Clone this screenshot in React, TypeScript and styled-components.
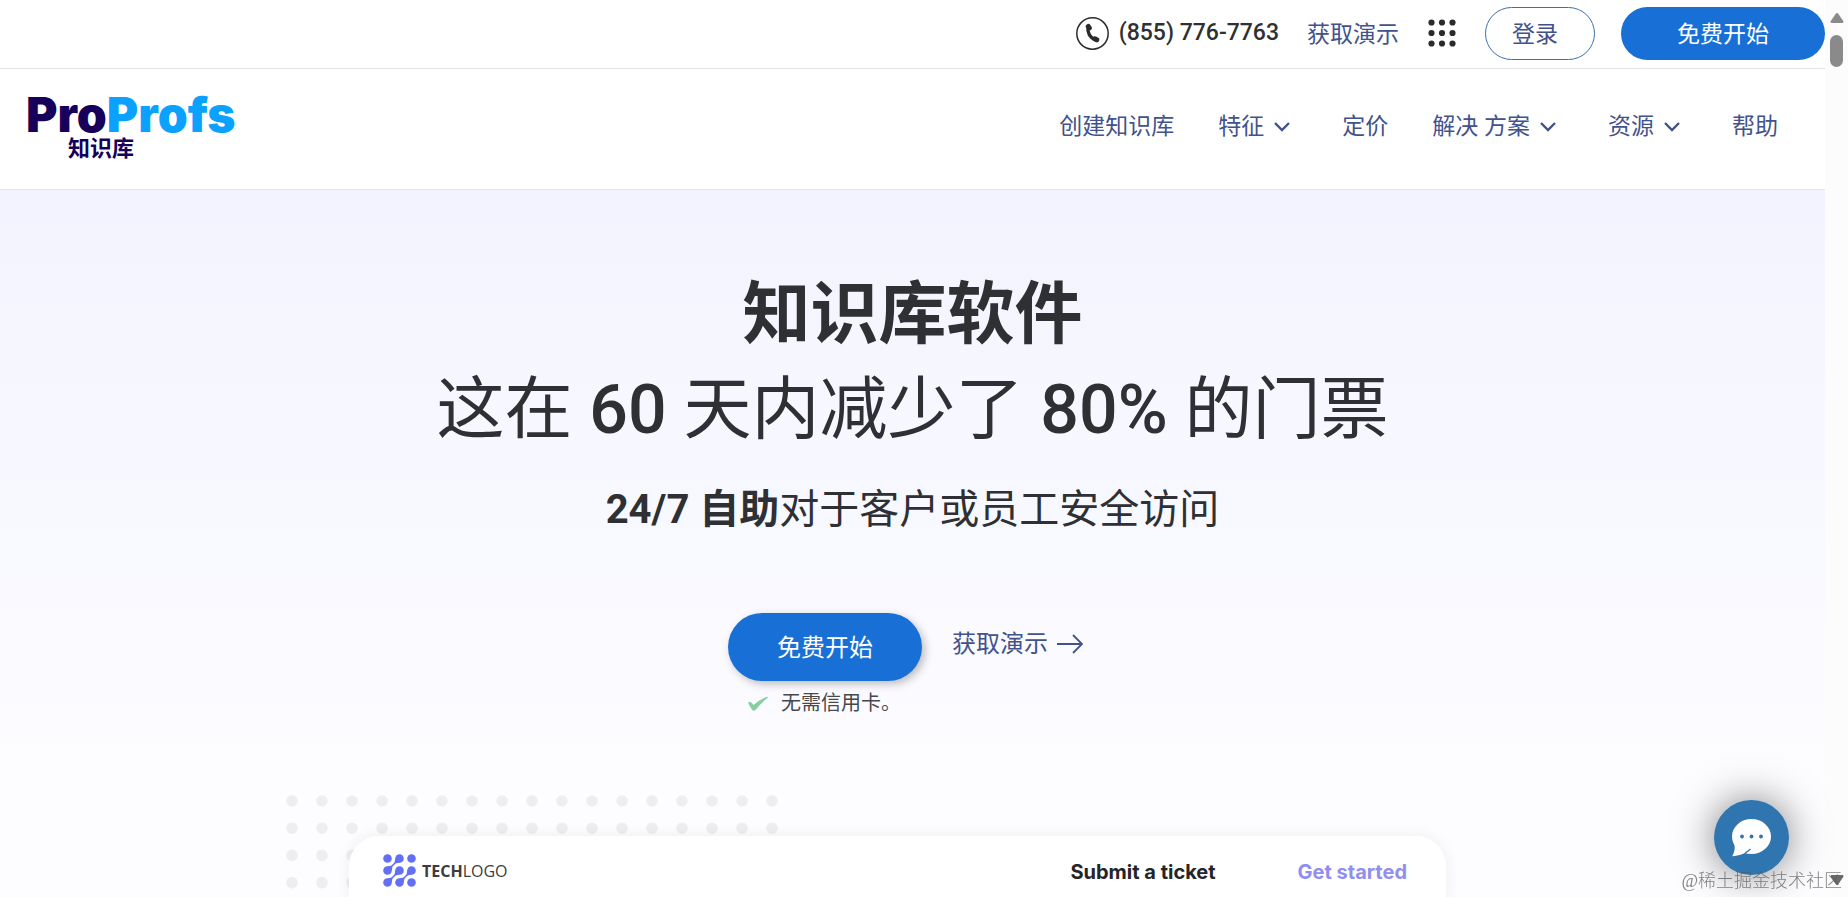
import React from 'react';
import styled, { createGlobalStyle } from 'styled-components';

const GlobalStyle = createGlobalStyle`
  *, *::before, *::after { box-sizing: border-box; }
  body {
    margin: 0;
    background: #fff;
    color: #2f3033;
    font-family: Roboto, "Noto Sans CJK SC", sans-serif;
  }
  a { color: inherit; text-decoration: none; }
  button { font-family: inherit; cursor: pointer; }
`;

const Shell = styled.div`
  display: flex;
  height: 100vh;
  overflow: hidden;
`;

const Page = styled.div`
  flex: 1;
  min-width: 0;
  display: flex;
  flex-direction: column;
`;

const TopBar = styled.div`
  display: flex;
  align-items: center;
  justify-content: flex-end;
  flex-shrink: 0;
  height: 69px;
  padding-bottom: 2px;
  border-bottom: 1px solid #e2e2e5;
`;

const PhoneLink = styled.a`
  display: flex;
  align-items: center;
  gap: 10px;
  margin-right: 28px;
  font-size: 23px;
  line-height: 32px;
  font-weight: 500;
`;

const TextLink = styled.a`
  color: #41528c;
  font-size: 23px;
  line-height: 32px;
`;

const TopLink = styled(TextLink)`
  padding-top: 4px;
`;

const AppsButton = styled.button`
  display: flex;
  margin: 0 29px;
  padding: 0;
  border: 0;
  background: none;
`;

const PillButton = styled.button<{ $kind: 'outline' | 'solid' | 'hero' }>`
  width: ${p => (p.$kind === 'outline' ? 110 : p.$kind === 'solid' ? 204 : 194)}px;
  height: ${p => (p.$kind === 'hero' ? 68 : 53)}px;
  padding: 0 ${p => (p.$kind === 'outline' ? 10 : 0)}px 3px 0;
  border: ${p => (p.$kind === 'outline' ? '1px solid #3a71ad' : '0')};
  border-radius: 34px;
  background: ${p => (p.$kind === 'outline' ? '#fff' : '#186fd6')};
  color: ${p => (p.$kind === 'outline' ? '#41528c' : '#fff')};
  box-shadow: ${p => (p.$kind === 'hero' ? '3px 3px 9px rgba(0, 0, 0, 0.25)' : 'none')};
  font-size: ${p => (p.$kind === 'hero' ? 24 : 23)}px;
`;

const TopActions = styled.div`
  display: flex;
  gap: 26px;
`;

const Header = styled.header`
  display: flex;
  align-items: center;
  justify-content: space-between;
  flex-shrink: 0;
  height: 121px;
  padding: 0 47px 0 26px;
  border-bottom: 1px solid #e4e4ee;
`;

const Logo = styled.a`
  display: flex;
  flex-direction: column;
  color: #16005a;
  padding-bottom: 4px;
`;

const LogoWord = styled.span`
  font-family: Inter, sans-serif;
  font-size: 48px;
  line-height: 44px;
  font-weight: 900;
`;

const LogoBlue = styled.span`
  color: #0ba1ff;
`;

const LogoSub = styled.span`
  padding-left: 42px;
  font-size: 22px;
  line-height: 24px;
  font-weight: 700;
`;

const Nav = styled.nav`
  display: flex;
  gap: 44px;
  padding-bottom: 4px;
`;

const NavItem = styled(TextLink)`
  display: flex;
  align-items: center;
  gap: 10px;

  svg { margin-right: 8px; }
`;

const Hero = styled.main`
  flex: 1;
  display: flex;
  flex-direction: column;
  align-items: center;
  padding-top: 78px;
  background: linear-gradient(#f2f3fe 0, #f6f7ff 220px, #fafaff 440px, #fdfdff 600px);
`;

const Title = styled.h1`
  margin: 0;
  text-align: center;
  font-size: 68px;
  line-height: 95px;
`;

const TitleLine = styled.span<{ $light?: boolean }>`
  display: block;
  font-weight: ${p => (p.$light ? 400 : 700)};
`;

const Digits = styled.span`
  font-weight: 500;
`;

const Subtitle = styled.p`
  margin: 22px 0 0;
  font-size: 40px;
  line-height: 60px;

  b { font-weight: 700; }
`;

const Actions = styled.div`
  display: flex;
  align-items: flex-start;
  gap: 30px;
  margin-top: 73px;
  padding-right: 14px;
`;

const StartColumn = styled.div`
  display: flex;
  flex-direction: column;
`;

const Note = styled.span`
  display: flex;
  align-items: center;
  gap: 12px;
  padding: 7px 0 0 20px;
  color: #47484b;
  font-size: 20px;
  line-height: 31px;
  white-space: nowrap;
  width: 194px;
`;

const DemoLink = styled(TextLink)`
  display: flex;
  align-items: center;
  gap: 8px;
  height: 62px;
  font-size: 24px;
`;

const Showcase = styled.section`
  position: relative;
  width: 69%;
  max-width: 1253px;
  flex: 1;
  display: flex;
  margin-top: 76px;
  padding: 41px 93px 0 63px;
`;

const DotField = styled.svg`
  position: absolute;
  left: 0;
  top: 0;
`;

const Card = styled.div`
  position: relative;
  flex: 1;
  display: flex;
  align-items: flex-start;
  padding: 18px 39px 0 34px;
  border-radius: 30px 30px 0 0;
  background: #fff;
  box-shadow: 0 0 12px 4px rgba(0, 0, 0, 0.04);
`;

const TechLogo = styled.span`
  display: flex;
  align-items: center;
  gap: 6px;
  margin-right: auto;
  color: #3c3c3e;
  font-family: "Open Sans", sans-serif;
  font-size: 16px;
  line-height: 32px;

  b { font-weight: 700; }
`;

const CardLink = styled.a<{ $accent?: boolean }>`
  margin-left: ${p => (p.$accent ? 82 : 0)}px;
  padding-top: 1px;
  color: ${p => (p.$accent ? '#918ef0' : '#252528')};
  font-family: Inter, sans-serif;
  font-size: 20px;
  line-height: 34px;
  font-weight: 700;
`;

const ScrollRail = styled.div`
  display: flex;
  flex-direction: column;
  align-items: center;
  flex-shrink: 0;
  width: 23px;
  padding: 13px 0 12px;
  background: #fcfcfd;
`;

const Thumb = styled.div`
  width: 13px;
  height: 32px;
  margin: 12px 0 auto;
  border-radius: 7px;
  background: #8a8a8a;
`;

const ChatButton = styled.button`
  position: fixed;
  right: 59px;
  bottom: 22px;
  width: 75px;
  height: 75px;
  display: flex;
  align-items: center;
  justify-content: center;
  padding: 0;
  border: 0;
  border-radius: 50%;
  background: #2f75b0;
  box-shadow: 0 0 40px rgba(0, 0, 0, 0.5);
`;

const Watermark = styled.span`
  position: fixed;
  right: 6px;
  bottom: 4px;
  color: rgba(90, 90, 90, 0.75);
  font-family: "Liberation Serif", "Noto Sans CJK SC", serif;
  font-size: 18px;
  line-height: 24px;
  font-weight: 300;
`;

const Chevron = () => (
  <svg width="16" height="10" viewBox="0 0 16 10" fill="none" stroke="#41528c" strokeWidth="2.4">
    <path d="M1 1l7 7 7-7" />
  </svg>
);

const PhoneIcon = () => (
  <svg width="33" height="33" viewBox="0 0 33 33">
    <circle cx="16.5" cy="16.5" r="15.7" fill="none" stroke="#2b2b2d" strokeWidth="1.5" />
    <g fill="none" stroke="#2b2b2d" strokeLinecap="round">
      <path d="M12 10c-.8 5.500 2 11 7.500 13" strokeWidth="3.4" />
      <path d="M12.300 9.500l1 1.400M18.800 21.800l2 1" strokeWidth="5" />
    </g>
  </svg>
);

const AppsIcon = () => (
  <svg width="28" height="28" viewBox="0 0 28 28" fill="#2b2b2d">
    {[3.5, 14, 24.5].map(y => [3.5, 14, 24.5].map(x => <circle key={`${x}-${y}`} cx={x} cy={y} r="3.100" />))}
  </svg>
);

const TECH_GRID = [4.5, 16.5, 28.5];
const TECH_LINKS = [[4.5, 16.5], [4.5, 28.5], [16.5, 28.5]];

const TechMark = () => (
  <svg width="33" height="33" viewBox="0 0 33 33" fill="#6470f3">
    {TECH_GRID.map(y => TECH_GRID.map(x => <circle key={`${x}-${y}`} cx={x} cy={y} r="4.3" />))}
    {TECH_LINKS.map(([x, y]) => (
      <g key={`${x}-${y}`}>
        <path d={`M${x} ${y - 4.3}L${x + 5} ${y - 5}L${x + 4.3} ${y}zM${x + 12} ${y - 7.7}L${x + 7} ${y - 7}L${x + 7.7} ${y - 12}z`} />
        <path d={`M${x + 3} ${y - 3}L${x + 9} ${y - 9}`} stroke="#6470f3" strokeWidth="1.6" />
      </g>
    ))}
  </svg>
);

const DOT_COLUMNS = Array.from({ length: 17 }, (_, i) => i);
const DOT_ROWS = [0, 1, 2, 3];

const navItems = [
  { label: '创建知识库' },
  { label: '特征', menu: true },
  { label: '定价' },
  { label: '解决 方案', menu: true },
  { label: '资源', menu: true },
  { label: '帮助' },
];

export default function App() {
  return (
    <>
      <GlobalStyle />
      <Shell>
        <Page>
          <TopBar>
            <PhoneLink href="tel:8557767763">
              <PhoneIcon />
              (855) 776-7763
            </PhoneLink>
            <TopLink href="#demo">获取演示</TopLink>
            <AppsButton type="button" aria-label="产品">
              <AppsIcon />
            </AppsButton>
            <TopActions>
              <PillButton type="button" $kind="outline">登录</PillButton>
              <PillButton type="button" $kind="solid">免费开始</PillButton>
            </TopActions>
          </TopBar>
          <Header>
            <Logo href="#home">
              <LogoWord>Pro<LogoBlue>Profs</LogoBlue></LogoWord>
              <LogoSub>知识库</LogoSub>
            </Logo>
            <Nav>
              {navItems.map(item => (
                <NavItem key={item.label} href="#nav">
                  {item.label}
                  {item.menu && <Chevron />}
                </NavItem>
              ))}
            </Nav>
          </Header>
          <Hero>
            <Title>
              <TitleLine>知识库软件</TitleLine>
              <TitleLine $light>
                这在 <Digits>60</Digits> 天内减少了 <Digits>80%</Digits> 的门票
              </TitleLine>
            </Title>
            <Subtitle><b>24/7 自助</b>对于客户或员工安全访问</Subtitle>
            <Actions>
              <StartColumn>
                <PillButton type="button" $kind="hero">免费开始</PillButton>
                <Note>
                  <svg width="21" height="16" viewBox="0 0 21 16" fill="#86cf9e">
                    <path d="M0 6.500c2-1.200 3.500-.6 5.500 2.500C10 5.500 14 2.500 19 .8c1-.2 1.200.6.400 1.300C15 5.500 11 9.500 7.500 14c-1.200 1.200-2.600 1-3.400-.2C2.500 11.500 1 9 0 6.500z" />
                  </svg>
                  无需信用卡。
                </Note>
              </StartColumn>
              <DemoLink href="#demo">
                获取演示
                <svg width="27" height="20" viewBox="0 0 27 20" fill="none" stroke="#41528c" strokeWidth="1.8">
                  <path d="M1 10h25M17 1l9 9-9 9" />
                </svg>
              </DemoLink>
            </Actions>
            <Showcase>
              <DotField width="492" height="102" fill="#eeeef1">
                {DOT_ROWS.map(r =>
                  DOT_COLUMNS.map(c => (
                    <circle key={`${r}-${c}`} cx={6 + c * 30} cy={6 + r * 27.2} r="5.8" />
                  )),
                )}
              </DotField>
              <Card>
                <TechLogo>
                  <TechMark />
                  <span><b>TECH</b>LOGO</span>
                </TechLogo>
                <CardLink href="#ticket">Submit a ticket</CardLink>
                <CardLink href="#start" $accent>Get started</CardLink>
              </Card>
            </Showcase>
          </Hero>
        </Page>
        <ScrollRail aria-hidden="true">
          <svg width="14" height="10" viewBox="0 0 14 10" fill="#8a8a8a">
            <path d="M7 0q.8 0 1.400.9l5 7.300q.6 1.800-1 1.800H1.600Q0 10 .6 8.200l5-7.300Q6.200 0 7 0z" />
          </svg>
          <Thumb />
          <svg width="14" height="10" viewBox="0 0 14 10" fill="#6a6a6a">
            <path d="M7 10q-.8 0-1.400-.9l-5-7.300Q0 0 1.600 0h10.800q1.600 0 1 1.800l-5 7.300Q7.800 10 7 10z" />
          </svg>
        </ScrollRail>
        <ChatButton type="button" aria-label="在线聊天">
          <svg width="41" height="40" viewBox="0 0 41 40">
            <ellipse cx="20.5" cy="18.5" rx="19.500" ry="17.500" fill="#fff" />
            <path d="M3 25c1.500 5 .5 9-1.800 13.200C8 38 14.500 35.500 19.500 31L12 24z" fill="#fff" />
            <path d="M19.500 31c-1.800 1.700-3.600 2.900-5.500 4" fill="none" stroke="#2f75b0" strokeWidth="1.200" />
            <g fill="#2f75b0">
              <circle cx="11" cy="18.5" r="1.900" />
              <circle cx="20.5" cy="18.5" r="1.900" />
              <circle cx="30" cy="18.5" r="1.900" />
            </g>
          </svg>
        </ChatButton>
        <Watermark>@稀土掘金技术社区</Watermark>
      </Shell>
    </>
  );
}
